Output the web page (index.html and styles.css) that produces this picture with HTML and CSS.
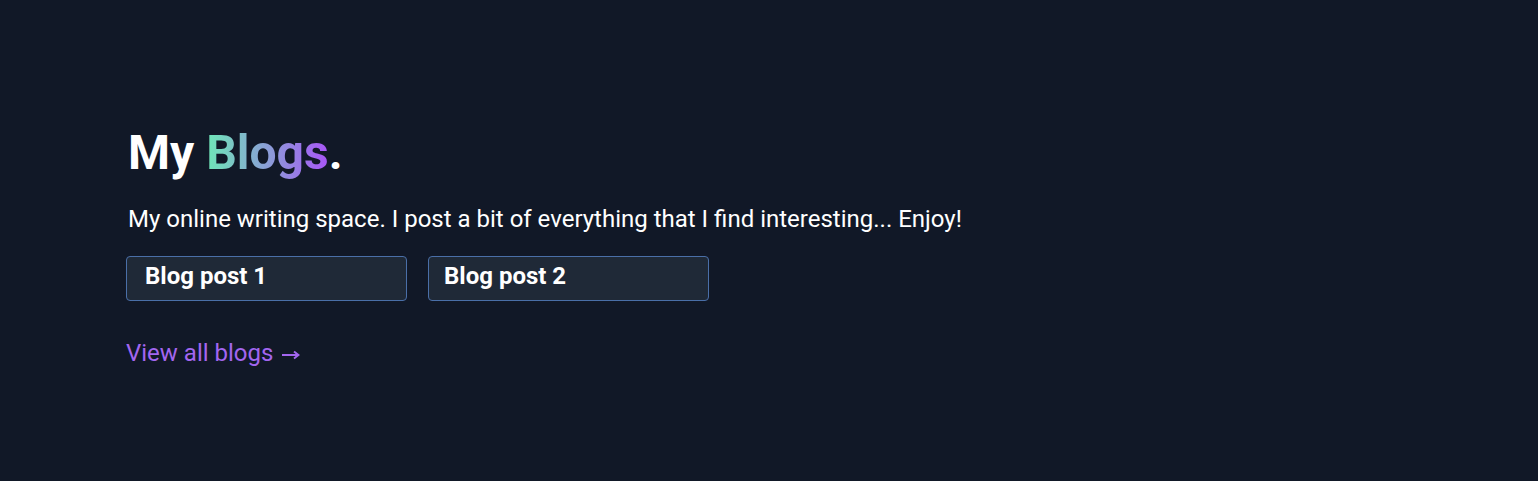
FILE: index.html
```html
<!DOCTYPE html>
<html>
<head>
<meta charset="utf-8">
<link rel="stylesheet" href="styles.css">
</head>
<body>
<main class="page">
  <section class="blogs">
    <h1 class="title">My <span class="grad">Blogs</span>.</h1>
    <p class="lead">My online writing space. I post a bit of everything that I find interesting... Enjoy!</p>
    <div class="cards">
      <a class="card first" href="#">Blog post 1</a>
      <a class="card" href="#">Blog post 2</a>
    </div>
    <a class="more" href="#">View all blogs <svg class="arrow" width="18" height="10" viewBox="0 0 18 10" aria-hidden="true"><path d="M0 5H16M12 1.5L16.5 5L12 8.5" fill="none" stroke="currentColor" stroke-width="2"/></svg></a>
  </section>
</main>
</body>
</html>
```
FILE: styles.css
```css
html, body {
  margin: 0;
  padding: 0;
  background: #111827;
  height: 100%;
}
body {
  font-family: Roboto, "Liberation Sans", sans-serif;
  color: #ffffff;
}
.page {
  padding: 123px 126px 0 126px;
}
.blogs {
  display: flex;
  flex-direction: column;
  align-items: flex-start;
}
.title {
  margin: 0 0 0 2px;
  font-size: 48px;
  font-weight: 700;
  line-height: 60px;
}
.grad {
  background: linear-gradient(90deg, #6ee7b7, #a855f7);
  -webkit-background-clip: text;
  background-clip: text;
  color: transparent;
}
.lead {
  margin: 20px 0 0 2px;
  font-size: 24px;
  line-height: 32px;
}
.cards {
  display: flex;
  gap: 21px;
  margin-top: 21px;
}
.card {
  box-sizing: border-box;
  width: 281px;
  height: 45px;
  padding: 3px 15px 0;
  background: #1f2937;
  border: 1px solid #4a6fa8;
  border-radius: 4px;
  color: #ffffff;
  text-decoration: none;
  font-size: 24px;
  font-weight: 700;
  line-height: 32px;
}
.card.first {
  padding-left: 18px;
}
.more {
  margin-top: 36px;
  color: #a366f0;
  font-size: 24px;
  line-height: 32px;
  text-decoration: none;
}
.arrow {
  margin-left: 3px;
  vertical-align: 1px;
}
```
